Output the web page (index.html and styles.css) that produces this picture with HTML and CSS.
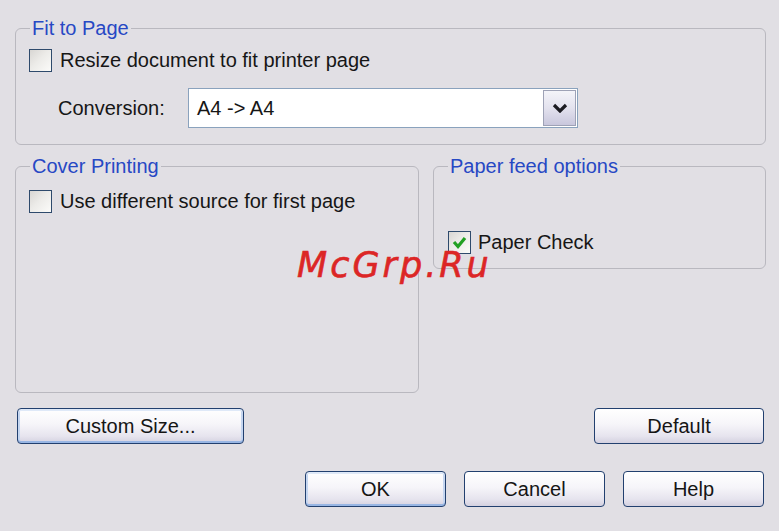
FILE: index.html
```html
<!DOCTYPE html>
<html>
<head>
<meta charset="utf-8">
<link rel="stylesheet" href="styles.css">
</head>
<body>
<div class="dialog">
  <div class="group group-fit">
    <div class="group-title">Fit to Page</div>
    <div class="check-row first">
      <span class="box"></span>
      <span class="label">Resize document to fit printer page</span>
    </div>
    <div class="conv-row">
      <span class="conv-label">Conversion:</span>
      <div class="combo">
        <span class="combo-text">A4 -&gt; A4</span>
        <span class="combo-btn">
          <svg width="16" height="10" viewBox="0 0 16 10"><path d="M2 2 L8 8 L14 2" fill="none" stroke="#1c1c22" stroke-width="3.2" stroke-linejoin="miter"/></svg>
        </span>
      </div>
    </div>
  </div>

  <div class="row2">
    <div class="group group-cover">
      <div class="group-title">Cover Printing</div>
      <div class="check-row cover">
        <span class="box"></span>
        <span class="label">Use different source for first page</span>
      </div>
    </div>
    <div class="group group-feed">
      <div class="group-title">Paper feed options</div>
      <div class="check-row feed">
        <span class="box checked">
          <svg width="21" height="21" viewBox="0 0 21 21"><path d="M5 10 L9 14.5 L16 6" fill="none" stroke="#22a022" stroke-width="3.2"/></svg>
        </span>
        <span class="label">Paper Check</span>
      </div>
    </div>
  </div>

  <div class="row3">
    <button class="btn btn-custom focus">Custom Size...</button>
    <button class="btn btn-default">Default</button>
  </div>

  <div class="row4">
    <button class="btn btn-small focus">OK</button>
    <button class="btn btn-small">Cancel</button>
    <button class="btn btn-small">Help</button>
  </div>
</div>
<div class="watermark">McGrp.Ru</div>
</body>
</html>
```

FILE: styles.css
```css
html, body {
  margin: 0;
  padding: 0;
}
body {
  background: #e1dfe4;
  font-family: "Liberation Sans", Arial, sans-serif;
  font-size: 20px;
  color: #161616;
  width: 779px;
  height: 531px;
  overflow: hidden;
  position: relative;
}
.dialog {
  box-sizing: border-box;
  width: 779px;
  padding: 28px 13px 0 15px;
}
.group {
  box-sizing: border-box;
  border: 1px solid #b9b8bf;
  border-radius: 6px;
}
.group-fit {
  height: 117px;
}
.group-title {
  margin: -12px 0 0 14px;
  padding: 0 2px;
  line-height: 22px;
  height: 22px;
  background: #e1dfe4;
  color: #2748c4;
  width: fit-content;
}
.check-row {
  display: flex;
  align-items: center;
  height: 23px;
  line-height: 23px;
}
.check-row.first {
  margin-top: 10px;
}
.check-row.cover {
  margin-top: 13px;
}
.check-row.feed {
  margin-top: 54px;
}
.box {
  box-sizing: border-box;
  width: 23px;
  height: 23px;
  margin-left: 13px;
  margin-right: 8px;
  border: 1px solid #2e4a6c;
  background: linear-gradient(135deg, #d8d6d3 0%, #ecebe8 45%, #fbfbf9 100%);
  display: flex;
  align-items: center;
  justify-content: center;
  flex: none;
}
.feed .box {
  margin-left: 14px;
  margin-right: 7px;
}
.conv-row {
  display: flex;
  align-items: center;
  margin-top: 16px;
}
.conv-label {
  margin-left: 42px;
  width: 130px;
}
.combo {
  box-sizing: border-box;
  width: 390px;
  height: 40px;
  border: 1px solid #8aa2bd;
  background: #ffffff;
  display: flex;
  align-items: center;
  padding: 1px;
}
.combo-text {
  flex: 1;
  padding-left: 7px;
}
.combo-btn {
  box-sizing: border-box;
  width: 33px;
  height: 36px;
  border: 1px solid #9ea2b6;
  background: linear-gradient(#f4f4f9 0%, #e3e2ee 50%, #c9c7dd 100%);
  display: flex;
  align-items: center;
  justify-content: center;
}
.row2 {
  display: flex;
  gap: 14px;
  margin-top: 21px;
  align-items: flex-start;
}
.group-cover {
  width: 404px;
  height: 227px;
}
.group-feed {
  width: 333px;
  height: 103px;
}
.btn {
  box-sizing: border-box;
  height: 36px;
  border: 1px solid #22406f;
  border-radius: 4px;
  background: linear-gradient(#ffffff 0%, #f6f5f9 45%, #e6e4ee 80%, #d4d1e0 100%);
  font-family: "Liberation Sans", Arial, sans-serif;
  font-size: 20px;
  color: #151515;
  padding: 0;
  margin: 0;
  line-height: 34px;
}
.btn.focus {
  box-shadow: inset 0 -2px 0 #98b6e4, inset 0 2px 0 #dfe9f8, inset 2px 0 0 #c5d6f0, inset -2px 0 0 #c5d6f0;
}
.row3 {
  display: flex;
  justify-content: space-between;
  margin-top: 15px;
  padding: 0 2px;
}
.btn-custom {
  width: 227px;
}
.btn-default {
  width: 170px;
}
.row4 {
  display: flex;
  justify-content: flex-end;
  gap: 18px;
  margin-top: 27px;
  padding-right: 2px;
}
.btn-small {
  width: 141px;
}
.watermark {
  position: absolute;
  left: 297px;
  top: 248px;
  font-family: "DejaVu Sans", sans-serif;
  font-style: italic;
  font-size: 35px;
  line-height: 35px;
  letter-spacing: 3px;
  color: #dc2626;
  -webkit-text-stroke: 0.6px #dc2626;
}
```
